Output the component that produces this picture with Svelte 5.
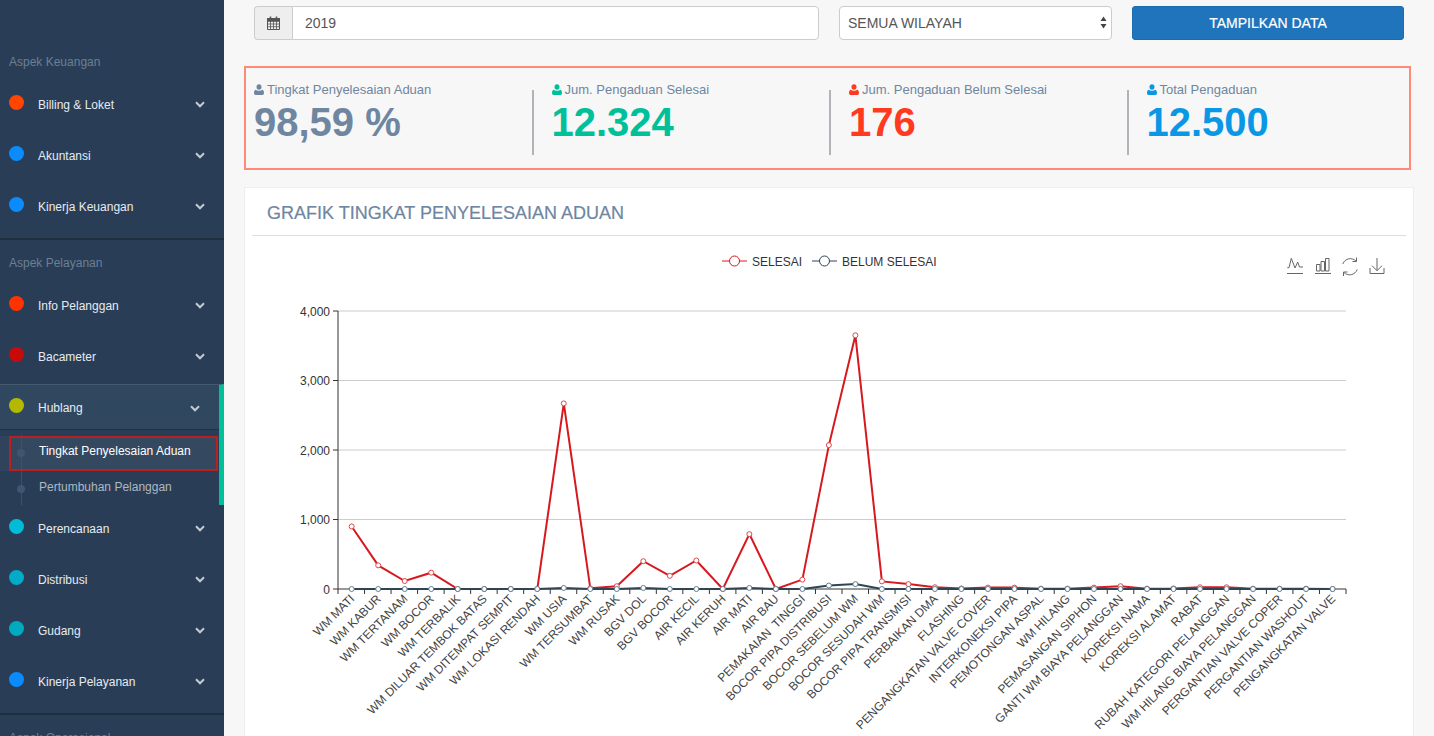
<script>
  const menu1 = [
    { label: 'Billing & Loket', color: '#ff4500' },
    { label: 'Akuntansi', color: '#0a8cff' },
    { label: 'Kinerja Keuangan', color: '#0a8cff' }
  ];
  const menu2a = [
    { label: 'Info Pelanggan', color: '#ff3300' },
    { label: 'Bacameter', color: '#c80a0a' }
  ];
  const menu2b = [
    { label: 'Perencanaan', color: '#00bcd8' },
    { label: 'Distribusi', color: '#00abc8' },
    { label: 'Gudang', color: '#00abc0' },
    { label: 'Kinerja Pelayanan', color: '#0a8cff' }
  ];
  const stats = [
    { label: 'Tingkat Penyelesaian Aduan', value: '98,59 %', color: '#6f86a1' },
    { label: 'Jum. Pengaduan Selesai', value: '12.324', color: '#00c09a' },
    { label: 'Jum. Pengaduan Belum Selesai', value: '176', color: '#ff3a1f' },
    { label: 'Total Pengaduan', value: '12.500', color: '#0a97e6' }
  ];
  const data = [
    ['WM MATI', 900, 0], ['WM KABUR', 340, 0], ['WM TERTANAM', 115, 0], ['WM BOCOR', 235, 0],
    ['WM TERBALIK', 0, 0], ['WM DILUAR TEMBOK BATAS', 0, 0], ['WM DITEMPAT SEMPIT', 0, 0],
    ['WM LOKASI RENDAH', 0, 0], ['WM USIA', 2670, 15], ['WM TERSUMBAT', 10, 0], ['WM RUSAK', 40, 0],
    ['BGV DOL', 400, 15], ['BGV BOCOR', 190, 0], ['AIR KECIL', 410, 0], ['AIR KERUH', 0, 0],
    ['AIR MATI', 790, 15], ['AIR BAU', 0, 0], ['PEMAKAIAN  TINGGI', 135, 0],
    ['BOCOR PIPA DISTRIBUSI', 2070, 50], ['BOCOR SEBELUM WM', 3650, 70], ['BOCOR SESUDAH WM', 110, 0],
    ['BOCOR PIPA TRANSMISI', 70, 0], ['PERBAIKAN DMA', 25, 0], ['FLASHING', 8, 0],
    ['PENGANGKATAN VALVE COVER', 20, 0], ['INTERKONEKSI PIPA', 20, 0], ['PEMOTONGAN ASPAL', 5, 0],
    ['WM HILANG', 5, 0], ['PEMASANGAN SIPHON', 20, 0], ['GANTI WM BIAYA PELANGGAN', 40, 0],
    ['KOREKSI NAMA', 5, 0], ['KOREKSI ALAMAT', 8, 0], ['RABAT', 25, 0],
    ['RUBAH KATEGORI PELANGGAN', 25, 0], ['WM HILANG BIAYA PELANGGAN', 5, 0],
    ['PERGANTIAN VALVE COPER', 5, 0], ['PERGANTIAN WASHOUT', 5, 0], ['PENGANGKATAN VALVE', 0, 0]
  ];
  const left = 338, right = 1346, base = 589, step = (right - left) / data.length;
  const px = (i) => 351.7 + 26.51 * i;
  const py = (v) => base - v * 0.0695;
  const line = (k) => data.map((d, i) => `${px(i).toFixed(1)},${py(d[k]).toFixed(1)}`).join(' ');
  const yTicks = [[0, '0'], [1000, '1,000'], [2000, '2,000'], [3000, '3,000'], [4000, '4,000']];
  const userPath = 'M5 5.2a2.5 2.5 0 1 0 0-5 2.5 2.5 0 0 0 0 5zM1.9 5.2C.7 5.4 0 6.6 0 8.2 0 9.3.7 10 1.6 10h6.800000000000001c.9 0 1.6-.7 1.6-1.8 0-1.6-.7-2.8-1.9-3-.7.6-1.7 1-3.1 1s-2.4-.4-3.1-1z';
</script>

{#snippet item(m)}
  <div class="item">
    <span class="dot" style="background:{m.color}"></span>
    <span class="label">{m.label}</span>
    <svg class="chev" width="10" height="7" viewBox="0 0 10 7"><path d="M1 1.300000000000001l4 4 4-4" fill="none" stroke="#c3ccd5" stroke-width="2"/></svg>
  </div>
{/snippet}

<div class="page">
  <aside class="sidebar">
    <section class="group first">
      <div class="heading">Aspek Keuangan</div>
      {#each menu1 as m}{@render item(m)}{/each}
    </section>
    <section class="group">
      <div class="heading">Aspek Pelayanan</div>
      {#each menu2a as m}{@render item(m)}{/each}
      <div class="open">
        <div class="item head">
          <span class="dot" style="background:#b4b900"></span>
          <span class="label">Hublang</span>
          <svg class="chev" width="10" height="7" viewBox="0 0 10 7"><path d="M1 1.300000000000001l4 4 4-4" fill="none" stroke="#c3ccd5" stroke-width="2"/></svg>
        </div>
        <div class="sub">
          <div class="subitem active"><span class="node"></span>Tingkat Penyelesaian Aduan</div>
          <div class="subitem"><span class="node"></span>Pertumbuhan Pelanggan</div>
        </div>
      </div>
      <div class="after">
        {#each menu2b as m}{@render item(m)}{/each}
      </div>
    </section>
    <section class="group">
      <div class="heading">Aspek Operasional</div>
    </section>
  </aside>

  <main class="content">
    <form class="filters">
      <div class="yearbox">
        <span class="addon">
          <svg width="13" height="14" viewBox="0 0 13 14">
            <path d="M.5 2.500h12v11H.5z" fill="none" stroke="#555"/>
            <path d="M.5 5.500h12M.5 8h12M.5 10.700h12M3.500 5v8.500M6.500 5v8.500M9.500 5v8.500" stroke="#555" stroke-width=".8"/>
            <path d="M0 2h13v3H0z" fill="#555"/>
            <path d="M3.500 .5v3M9.500 .5v3" stroke="#555" stroke-width="1.500"/>
          </svg>
        </span>
        <input class="year" value="2019" />
      </div>
      <div class="selectbox">
        <select class="region"><option>SEMUA WILAYAH</option></select>
        <svg class="arrows" width="7" height="13" viewBox="0 0 7 13"><path d="M3.500 .5l3 4.500H.5zM3.500 12.500L.5 8h6z" fill="#444"/></svg>
      </div>
      <button class="show" type="button">TAMPILKAN DATA</button>
    </form>

    <div class="stats">
      {#each stats as s}
        <div class="stat">
          <div class="stat-label">
            <svg width="10" height="11" viewBox="0 0 10 10" preserveAspectRatio="none"><path d={userPath} fill={s.color}/></svg>
            {s.label}
          </div>
          <div class="stat-value" style="color:{s.color}">{s.value}</div>
        </div>
      {/each}
    </div>

    <div class="card">
      <h2 class="title">GRAFIK TINGKAT PENYELESAIAN ADUAN</h2>
      <svg class="chart" viewBox="245 236 1168 500" width="1168" height="500">
        <!-- legend -->
        <g class="legend">
          <path d="M722 261h25" stroke="#d6191f" stroke-width="1"/>
          <circle cx="734.500" cy="261" r="5" fill="#fff" stroke="#d6191f"/>
          <text x="752" y="265.500">SELESAI</text>
          <path d="M812 261h25" stroke="#2f4554" stroke-width="1"/>
          <circle cx="824.500" cy="261" r="5" fill="#fff" stroke="#2f4554"/>
          <text x="842" y="265.500">BELUM SELESAI</text>
        </g>
        <!-- toolbox -->
        <g fill="none" stroke="#666" stroke-width="1">
          <path d="M1287 273.500h16M1287.300 267.700h1.700l2.300-9.400 3.700 9.700 2.700-6 1.800 5h3.500"/>
          <path d="M1315 273.500h16M1316.500 271v-6.500h3.500v6.500zM1321 271v-9.500h3.500v9.500zM1325.500 271v-12.500h3.500v12.500z"/>
          <path d="M1342.800 264a8 8 0 0 1 13.200-3M1357.200 269.500a8 8 0 0 1-13.200 3"/>
          <path d="M1356.500 257.500v4h-4M1343.500 276v-4h4"/>
          <path d="M1377 258v12.500M1372 265.700l5 5 5-5M1370 268v5.500h14V268"/>
        </g>
        <!-- grid -->
        {#each yTicks as t}
          {#if t[0] > 0}
            <line x1={left} x2={right} y1={py(t[0])} y2={py(t[0])} stroke="#ccc"/>
          {/if}
          <line x1={left - 5} x2={left} y1={py(t[0])} y2={py(t[0])} stroke="#333"/>
          <text class="ytick" x={left - 8} y={py(t[0]) + 4.500}>{t[1]}</text>
        {/each}
        <line x1={left} x2={left} y1="311" y2={base} stroke="#333"/>
        <line x1={left} x2={right} y1={base} y2={base} stroke="#333"/>
        {#each data as d, i}
          <line x1={left + step * i} x2={left + step * i} y1={base} y2={base + 5} stroke="#333"/>
          <text class="xtick" transform="translate({px(i) + 3.500} {base + 10.500}) rotate(-45)">{d[0]}</text>
        {/each}
        <line x1={right} x2={right} y1={base} y2={base + 5} stroke="#333"/>
        <!-- series -->
        <polyline points={line(1)} fill="none" stroke="#d6191f" stroke-width="2"/>
        {#each data as d, i}
          <circle cx={px(i)} cy={py(d[1])} r="2.500" fill="#fff" stroke="#e0454a"/>
        {/each}
        <polyline points={line(2)} fill="none" stroke="#2f4554" stroke-width="2"/>
        {#each data as d, i}
          <circle cx={px(i)} cy={py(d[2])} r="2.500" fill="#fff" stroke="#5f7f92"/>
        {/each}
      </svg>
    </div>
  </main>
</div>

<style>
  :global(body) { margin: 0; background: #f7f7f7; }
  .page { display: flex; height: 736px; overflow: hidden; font-family: "Liberation Sans", Arial, sans-serif; }
  .sidebar { width: 224px; flex: none; background: #293e56; color: #e6ebf0; height: 736px; overflow: hidden; }
  .group { border-bottom: 2px solid #1f2f3e; padding-bottom: 6px; }
  .group.first { padding-top: 39px; }
  .heading { padding: 15px 9px 9px; font-size: 12px; line-height: 16px; color: #6b7f95; }
  .item { display: flex; align-items: center; height: 51px; padding: 0 19px 0 9px; font-size: 12px; box-sizing: border-box; }
  .dot { width: 15px; height: 15px; border-radius: 50%; margin: 0 14px 5px 0; flex: none; }
  .label { flex: 1; }
  .chev { flex: none; }
  .open { margin-top: 2px; border-top: 1px solid #45596f; border-right: 5px solid #00c09a; box-sizing: border-box; width: 224px; }
  .item.head { height: 45px; padding-top: 2px; background: #304760; border-bottom: 1px solid #1f3143; }
  .sub { height: 75px; position: relative; padding-top: 6px; box-sizing: border-box; }
  .sub::before { content: ""; position: absolute; z-index: 1; left: 21px; top: 5px; bottom: 0; width: 1px; background: #3c526b; }
  .subitem { position: relative; height: 35px; line-height: 33px; padding-left: 39px; font-size: 12px; color: #aeb8c4; box-sizing: border-box; }
  .subitem.active { color: #fff; background: #34495f; border: 2px solid #b92020; margin-left: 9px; padding-left: 28px; line-height: 27px; width: 209px; box-shadow: -11px 0 0 #2f445c; }
  .node { position: absolute; z-index: 2; left: 17px; top: 14px; width: 8px; height: 8px; border-radius: 50%; background: #3f5570; }
  .active .node { left: 6px; top: 11px; }
  .after { margin-top: -2px; }
  .content { flex: 1; min-width: 0; position: relative; }
  .filters { display: flex; height: 34px; margin: 6px 30px 0 30px; gap: 20px; }
  .yearbox { display: flex; width: 565px; flex: none; }
  .addon { width: 38px; box-sizing: border-box; background: #eee; border: 1px solid #ccc; border-right: 0; border-radius: 4px 0 0 4px; display: flex; align-items: center; justify-content: center; }
  .year { flex: 1; min-width: 0; box-sizing: border-box; border: 1px solid #ccc; border-radius: 0 4px 4px 0; padding: 0 12px; font: 14px "Liberation Sans", Arial, sans-serif; color: #555; background: #fff; }
  .selectbox { position: relative; width: 273px; flex: none; }
  .region { appearance: none; width: 100%; height: 34px; box-sizing: border-box; border: 1px solid #ccc; border-radius: 4px; background: #fff; padding: 0 8px; font: 14px "Liberation Sans", Arial, sans-serif; color: #555; }
  .arrows { position: absolute; right: 5px; top: 10px; pointer-events: none; }
  .show { width: 272px; flex: none; border: 1px solid #1c6cae; border-radius: 3px; background: #1f74bb; color: #fff; font: 14px "Liberation Sans", Arial, sans-serif; -webkit-text-stroke: .2px #fff; padding: 0; }
  .stats { display: grid; grid-template-columns: repeat(3, 279.5px) 1fr; column-gap: 18px; box-sizing: border-box; width: 1167px; height: 104px; margin: 26px 0 0 20px; padding: 14px 0 0 8px; border: 2px solid #ff8a75; overflow: hidden; }
  .stat { height: 65px; margin-top: 8px; border-right: 2px solid #b0b4b8; box-sizing: border-box; }
  .stat:last-child { border-right: 0; }
  .stat-label { display: flex; align-items: center; gap: 3px; margin-top: -9px; height: 17px; font-size: 13px; color: #6f86a1; white-space: nowrap; }
  .stat-value { font-size: 40px; line-height: 44px; font-weight: 700; white-space: nowrap; margin-top: 2px; }
  .card { width: 1170px; box-sizing: border-box; margin: 17px 0 0 20px; background: #fff; border: 1px solid #eee; height: 600px; }
  .title { margin: 0 7px; height: 48px; line-height: 50px; box-sizing: border-box; border-bottom: 1px solid #ddd; padding-left: 15px; font-size: 18px; font-weight: 400; color: #6f86a1; -webkit-text-stroke: .2px #6f86a1; }
  .chart { display: block; font-family: "Liberation Sans", Arial, sans-serif; }
  .legend text { font-size: 12px; fill: #333; }
  .ytick { font-size: 12px; fill: #333; text-anchor: end; }
  .xtick { font-size: 12px; fill: #444; text-anchor: end; white-space: pre; }
</style>
